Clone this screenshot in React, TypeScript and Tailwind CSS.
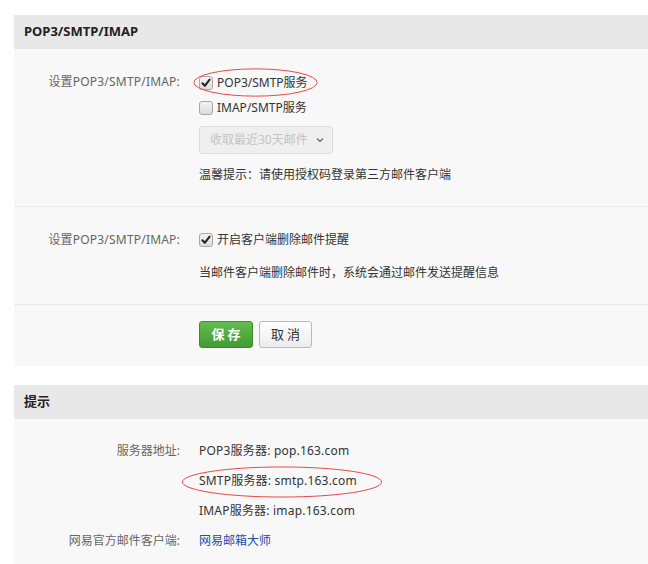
import React from "react";

const font = { fontFamily: '"Noto Sans", "Noto Sans CJK SC", sans-serif' };

function Check({ checked }: { checked: boolean }) {
  return (
    <svg width="14" height="14" viewBox="0 0 14 14" className="shrink-0">
      <defs>
        <linearGradient id="cbg" x1="0" y1="0" x2="0" y2="1">
          <stop offset="0" stopColor="#f4f4f4" />
          <stop offset="1" stopColor="#dcdcdc" />
        </linearGradient>
      </defs>
      <rect x="0.5" y="0.5" width="13" height="13" rx="2.5" fill="url(#cbg)" stroke="#a8a8a8" />
      {checked && (
        <path d="M3.4 7.2 L5.8 9.8 L10.6 3.6" fill="none" stroke="#222" strokeWidth="2" strokeLinecap="round" strokeLinejoin="round" />
      )}
    </svg>
  );
}

function Ellipse({ className }: { className: string }) {
  return (
    <svg className={"absolute pointer-events-none " + className} viewBox="0 0 100 100" preserveAspectRatio="none">
      <ellipse cx="50" cy="50" rx="49.3" ry="47" fill="none" stroke="#e8484a" strokeWidth="1" vectorEffect="non-scaling-stroke" />
    </svg>
  );
}

export default function App() {
  return (
    <div className="min-h-[564px] bg-white pt-[15px] pl-[14px] text-[12px] text-[#333]" style={font}>
      {/* Panel 1 */}
      <div>
        <div className="h-[34px] bg-[#e8e8e8] pl-[10px] flex items-center font-bold text-[13px] text-[#222]">
          POP3/SMTP/IMAP
        </div>
        <div className="bg-[#f8f8f8]">
          <div className="grid grid-cols-[166px_1fr] gap-x-[19px] pt-[21px] pb-[19px] border-b border-[#e9e9e9]">
            <div className="text-right text-[#666] leading-[24px] tracking-[0.2px]">设置POP3/SMTP/IMAP:</div>
            <div className="flex flex-col items-start">
              <div className="relative h-[25px] flex items-center gap-[4px]">
                <Check checked />
                <span>POP3/SMTP服务</span>
                <Ellipse className="left-[-6px] top-[-2px] w-[125px] h-[29px]" />
              </div>
              <div className="h-[25px] flex items-center gap-[4px]">
                <Check checked={false} />
                <span>IMAP/SMTP服务</span>
              </div>
              <div className="mt-[6px] h-[28px] w-[134px] border border-[#dcdcdc] rounded-[3px] bg-[#efefef] flex items-center pl-[10px] gap-[8px] text-[#c4c4c4]">
                <span>收取最近30天邮件</span>
                <svg width="8" height="6" viewBox="0 0 8 6"><path d="M1 1.5 L4 4.5 L7 1.5" fill="none" stroke="#666" strokeWidth="1.2" /></svg>
              </div>
              <div className="mt-[9px] leading-[24px]">温馨提示：请使用授权码登录第三方邮件客户端</div>
            </div>
          </div>
          <div className="grid grid-cols-[166px_1fr] gap-x-[19px] pt-[21px] pb-[19px] border-b border-[#e9e9e9]">
            <div className="text-right text-[#666] leading-[24px] tracking-[0.2px]">设置POP3/SMTP/IMAP:</div>
            <div className="flex flex-col items-start">
              <div className="h-[24px] flex items-center gap-[4px]">
                <Check checked />
                <span>开启客户端删除邮件提醒</span>
              </div>
              <div className="mt-[9px] leading-[24px]">当邮件客户端删除邮件时，系统会通过邮件发送提醒信息</div>
            </div>
          </div>
          <div className="grid grid-cols-[166px_1fr] gap-x-[19px] pt-[16px] pb-[18px]">
            <div />
            <div className="flex gap-[6px]">
              <button className="h-[27px] w-[54px] rounded-[3px] border border-[#3b8e2c] bg-gradient-to-b from-[#63bd50] to-[#3f9c31] text-white font-bold text-[13px] tracking-[3px] pl-[3px]">
                保存
              </button>
              <button className="h-[27px] w-[53px] rounded-[3px] border border-[#b9b9b9] bg-gradient-to-b from-[#ffffff] to-[#ececec] text-[#333] text-[13px] tracking-[3px] pl-[3px]">
                取消
              </button>
            </div>
          </div>
        </div>
      </div>

      {/* Panel 2 */}
      <div className="mt-[19px]">
        <div className="h-[34px] bg-[#e8e8e8] pl-[10px] flex items-center font-bold text-[13px] text-[#222]">
          提示
        </div>
        <div className="bg-[#f8f8f8] pt-[17px] pb-[10px] grid grid-cols-[166px_1fr] gap-x-[19px] leading-[30px]">
          <div className="text-right text-[#666]">服务器地址:</div>
          <div className="tracking-[0.2px]">POP3服务器: pop.163.com</div>
          <div />
          <div className="relative tracking-[0.2px]">
            <span>SMTP服务器: smtp.163.com</span>
            <Ellipse className="left-[-18px] top-[0px] w-[202px] h-[32px]" />
          </div>
          <div />
          <div className="tracking-[0.2px]">IMAP服务器: imap.163.com</div>
          <div className="text-right text-[#666]">网易官方邮件客户端:</div>
          <div className="text-[#1a4fa8]">网易邮箱大师</div>
        </div>
      </div>
    </div>
  );
}
